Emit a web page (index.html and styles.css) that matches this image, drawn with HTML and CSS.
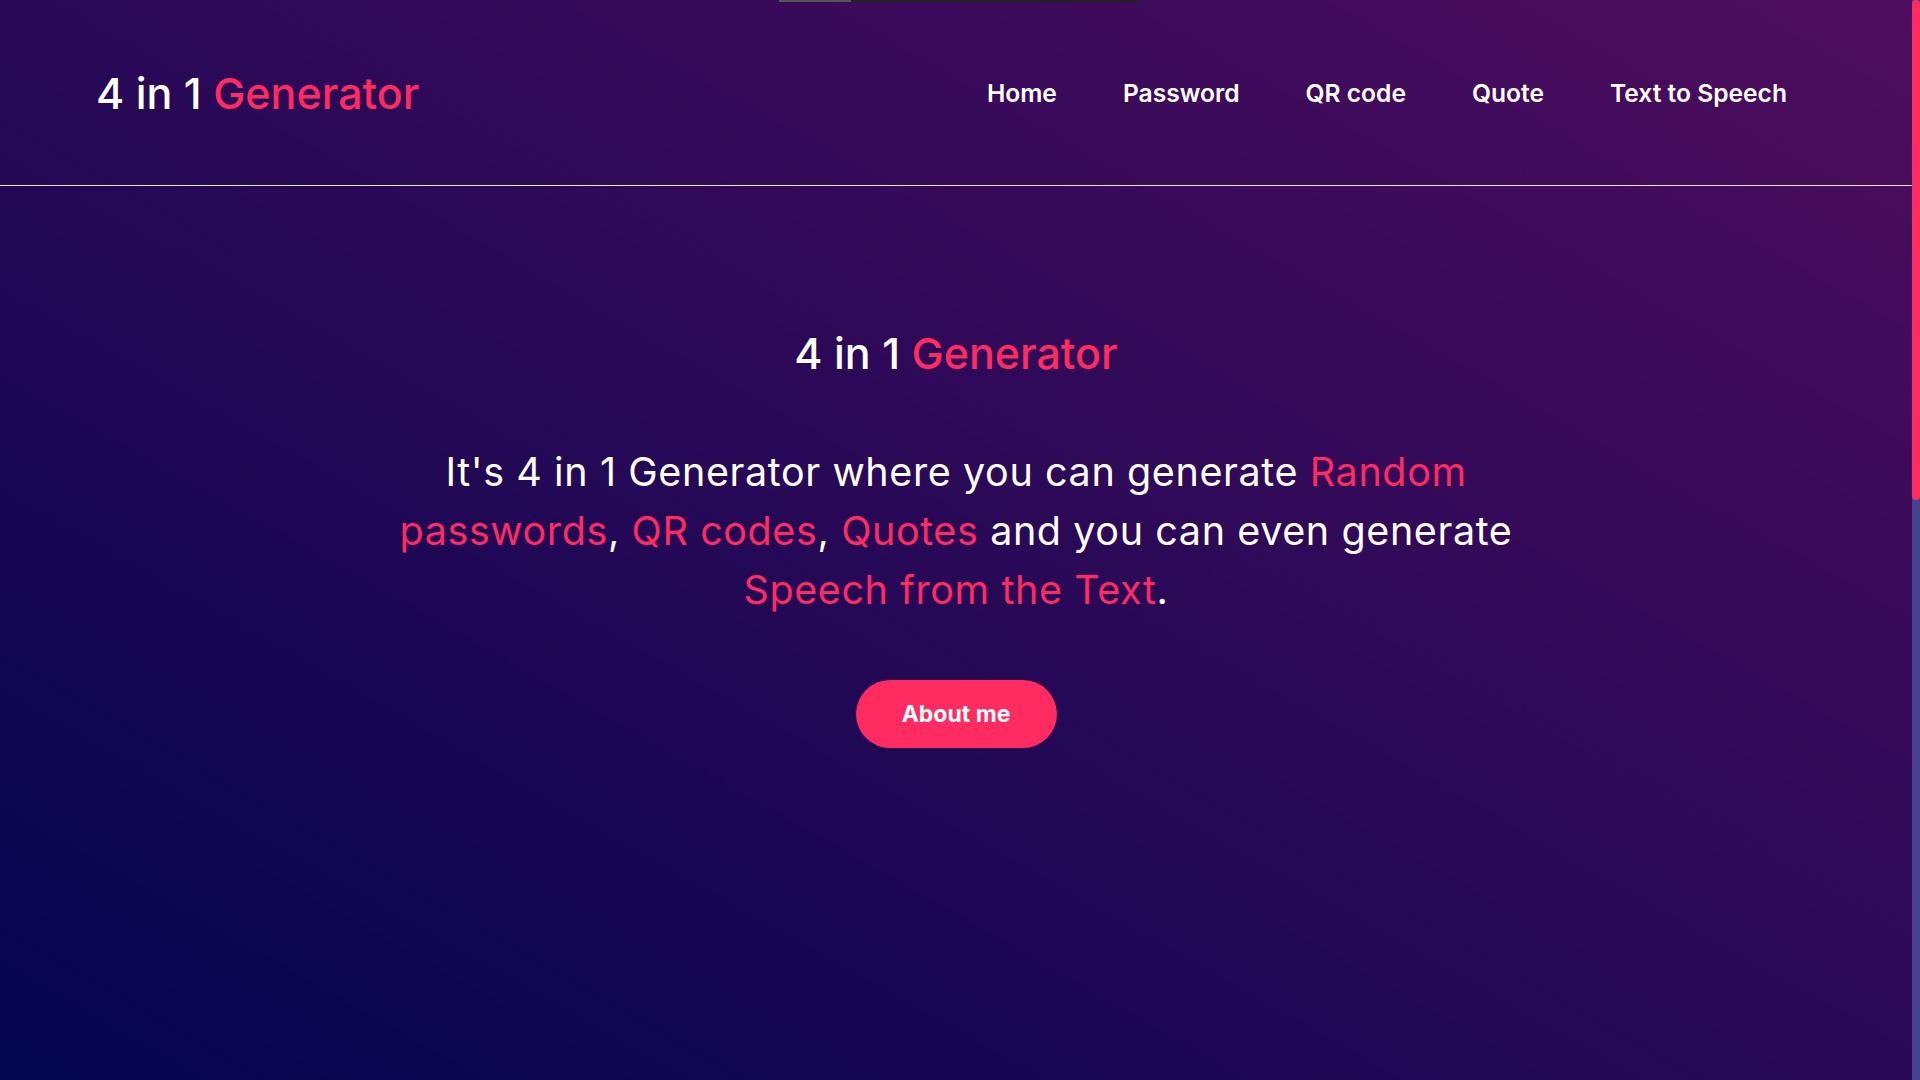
FILE: index.html
```html
<!DOCTYPE html>
<html lang="en">
<head>
<meta charset="utf-8">
<title>4 in 1 Generator</title>
<link rel="stylesheet" href="styles.css">
</head>
<body>
<div class="topbar"><span class="topbar-fill"></span></div>
<div class="page">
  <header class="site-header">
    <a class="logo" href="#">4 in 1 <span class="accent">Generator</span></a>
    <nav class="nav">
      <a href="#">Home</a>
      <a href="#">Password</a>
      <a href="#">QR code</a>
      <a href="#">Quote</a>
      <a href="#">Text to Speech</a>
    </nav>
  </header>
  <main class="hero">
    <h1 class="hero-title">4 in 1 <span class="accent">Generator</span></h1>
    <p class="hero-text">It's 4 in 1 Generator where you can generate <span class="accent">Random passwords</span>, <span class="accent">QR codes</span>, <span class="accent">Quotes</span> and you can even generate <span class="accent">Speech from the Text</span>.</p>
    <a class="btn" href="#">About me</a>
  </main>
</div>
<div class="scrollbar"><span class="scrollbar-thumb"></span></div>
</body>
</html>
```
FILE: styles.css
```css
* { box-sizing: border-box; }
html, body { margin: 0; padding: 0; }
body {
  font-family: Inter, "Noto Sans", sans-serif;
  color: #fff;
  background: #05064f;
  display: flex;
  height: 100vh;
  overflow: hidden;
}

a { color: inherit; text-decoration: none; }
.accent { color: #ff2b61; }

.topbar {
  position: absolute;
  top: 0;
  left: 779px;
  width: 360px;
  height: 2px;
  background: #222;
  z-index: 10;
}
.topbar-fill { display: block; width: 72px; height: 100%; background: #555; }

.page {
  flex: 1;
  min-width: 0;
  height: 100vh;
  background: linear-gradient(to top right, #03054f 0%, #4e0d5e 100%);
}

.scrollbar {
  width: 8px;
  height: 100vh;
  background: #46418d;
  flex-shrink: 0;
}
.scrollbar-thumb {
  display: block;
  width: 100%;
  height: 500px;
  background: #ff2b61;
  border-radius: 4px;
}

.site-header {
  height: 186px;
  display: flex;
  align-items: center;
  justify-content: space-between;
  padding: 0 125px 0 96px;
  border-bottom: 1px solid #e8e8ee;
}
.logo {
  font-size: 43px;
  font-weight: 500;
}
.nav { display: flex; gap: 66px; }
.nav a {
  font-size: 24.6px;
  font-weight: 600;
}

.hero {
  display: flex;
  flex-direction: column;
  align-items: center;
  text-align: center;
  padding-top: 140px;
}
.hero-title {
  margin: 0;
  font-size: 43px;
  font-weight: 500;
  line-height: 54px;
}
.hero-text {
  margin: 63px 0 0;
  max-width: 1160px;
  font-size: 39.5px;
  letter-spacing: 0.6px;
  font-weight: 400;
  line-height: 58.9px;
}
.btn {
  margin-top: 60px;
  width: 201px;
  height: 68px;
  border-radius: 34px;
  background: #ff2b61;
  display: flex;
  align-items: center;
  justify-content: center;
  font-size: 23px;
  font-weight: 700;
}
```
